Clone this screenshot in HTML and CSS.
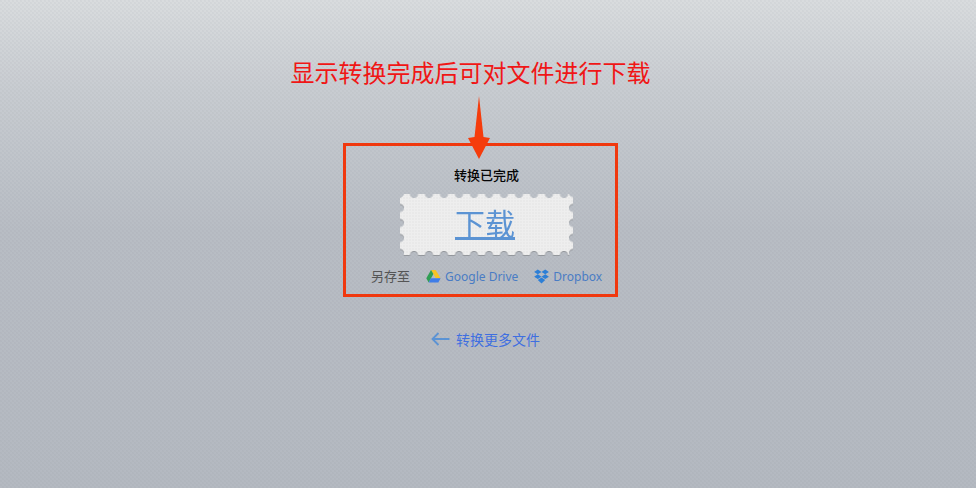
FILE: index.html
```html
<!DOCTYPE html>
<html lang="zh">
<head>
<meta charset="utf-8">
<title>转换已完成</title>
<link rel="stylesheet" href="styles.css">
</head>
<body>
<main class="page">
  <h1 class="note">显示转换完成后可对文件进行下载</h1>
  <section class="result">
    <svg class="pointer" width="22" height="63" viewBox="0 0 22 63" aria-hidden="true">
      <path d="M11 0 L15.500 41 L22 42 L11 63 L0 42 L6.500 41 Z" fill="#f53c0c"/>
    </svg>
    <h2 class="status">转换已完成</h2>
    <div class="ticket-edge">
      <a class="ticket" href="#">下载</a>
    </div>
    <div class="save">
      <span class="save-label">另存至</span>
      <a class="service service-drive" href="#">
        <svg width="15" height="13" viewBox="0 0 15 13" aria-hidden="true">
          <path d="M5 0 H9.700 L14.600 8.200 H9.800 Z" fill="#f7c325"/>
          <path d="M5 0 L7.400 4.100 L2.700 12.400 L0.300 8.300 Z" fill="#2f9e53"/>
          <path d="M4.800 8.300 H14.700 L12.300 12.500 H2.700 Z" fill="#3f7de8"/>
        </svg>
        <span>Google Drive</span>
      </a>
      <a class="service" href="#">
        <svg width="15" height="15" viewBox="0 0 15 15" aria-hidden="true">
          <path d="M3.800 0.500 L7.500 2.900 L3.800 5.300 L0.100 2.900 Z M11.200 0.500 L14.900 2.900 L11.200 5.300 L7.500 2.900 Z M3.800 5.300 L7.500 7.700 L3.800 10.100 L0.100 7.700 Z M11.200 5.300 L14.900 7.700 L11.200 10.100 L7.500 7.700 Z M3.800 11 L7.500 8.600 L11.200 11 L7.500 14.500 Z" fill="#2d7fd6"/>
        </svg>
        <span>Dropbox</span>
      </a>
    </div>
  </section>
  <a class="back" href="#">
    <svg width="19" height="14" viewBox="0 0 19 14" aria-hidden="true">
      <path d="M18.500 7 H1.500 M7.500 1 L1.500 7 L7.500 13" fill="none" stroke="#5b93d4" stroke-width="1.800"/>
    </svg>
    <span>转换更多文件</span>
  </a>
</main>
</body>
</html>
```

FILE: styles.css
```css
* { box-sizing: border-box; }

html, body { height: 100%; }

body {
  margin: 0;
  font-family: "Noto Sans", "Noto Sans CJK SC", sans-serif;
  background-color: #b3b8c0;
  background-image:
    radial-gradient(circle at 1px 1px, rgba(110, 115, 125, 0.05) 1px, transparent 1.3px),
    radial-gradient(circle at 3px 3px, rgba(110, 115, 125, 0.05) 1px, transparent 1.3px),
    linear-gradient(to bottom, #d9dcde 0, #c8ccd1 90px, #b8bdc4 230px, #b4b9c1 488px);
  background-size: 4px 4px, 4px 4px, 100% 100%;
  overflow: hidden;
}

.page {
  display: flex;
  flex-direction: column;
  align-items: center;
  padding: 55px 5px 0 0;
}

.note {
  margin: 0 30px 69px 0;
  height: 34px;
  font-size: 24px;
  line-height: 34px;
  font-weight: 400;
  color: #f01616;
  white-space: nowrap;
  font-family: "Noto Sans CJK SC", sans-serif;
}

.result {
  position: relative;
  display: flex;
  flex-direction: column;
  align-items: center;
  width: 275px;
  height: 154px;
  margin: -15px 10px 0 0;
  border: 3px solid #f0380e;
  padding-top: 19px;
}

.pointer {
  position: absolute;
  top: -50px;
  left: 122px;
}

.status {
  margin: 0 0 10px 12px;
  height: 19px;
  font-size: 13px;
  line-height: 19px;
  font-weight: 500;
  color: #050505;
  font-family: "Noto Sans CJK SC", sans-serif;
}

.ticket-edge {
  margin-left: 11px;
  filter: drop-shadow(0 1px 0 rgba(70, 70, 70, 0.3));
}

.ticket {
  display: flex;
  align-items: center;
  justify-content: center;
  width: 173px;
  height: 61px;
  padding: 0 2px 6px 0;
  font-size: 30px;
  color: #5b93d3;
  font-family: "Noto Sans CJK SC", sans-serif;
  text-decoration: underline;
  background-color: #eeeeee;
  background-image:
    radial-gradient(circle at 1px 1px, rgba(0, 0, 0, 0.02) 1px, transparent 1.3px);
  background-size: 3px 3px;
  -webkit-mask-image:
    radial-gradient(circle at 50% 0, transparent 3.6px, #000 4.4px),
    radial-gradient(circle at 50% 100%, transparent 3.6px, #000 4.4px),
    radial-gradient(circle at 0 50%, transparent 3.6px, #000 4.4px),
    radial-gradient(circle at 100% 50%, transparent 3.6px, #000 4.4px);
  mask-image:
    radial-gradient(circle at 50% 0, transparent 3.6px, #000 4.4px),
    radial-gradient(circle at 50% 100%, transparent 3.6px, #000 4.4px),
    radial-gradient(circle at 0 50%, transparent 3.6px, #000 4.4px),
    radial-gradient(circle at 100% 50%, transparent 3.6px, #000 4.4px);
  -webkit-mask-size: 15px 100%, 15px 100%, 100% 15px, 100% 15px;
  mask-size: 15px 100%, 15px 100%, 100% 15px, 100% 15px;
  -webkit-mask-repeat: repeat-x, repeat-x, repeat-y, repeat-y;
  mask-repeat: repeat-x, repeat-x, repeat-y, repeat-y;
  -webkit-mask-position: 6.500px 0, 6.500px 0, 0 6.500px, 0 6.500px;
  mask-position: 6.500px 0, 6.500px 0, 0 6.500px, 0 6.500px;
  -webkit-mask-composite: source-in;
  mask-composite: intersect;
}

.save {
  display: flex;
  align-items: center;
  align-self: flex-start;
  margin-top: 11px;
  margin-left: 25px;
  height: 20px;
  font-size: 12px;
  white-space: nowrap;
}

.save-label {
  margin-right: 16px;
  padding-bottom: 1px;
  font-size: 13px;
  color: #555;
  font-family: "Noto Sans CJK SC", sans-serif;
}

.service {
  display: flex;
  align-items: center;
  gap: 4px;
  color: #4a7cc4;
  text-decoration: none;
}

.service-drive { margin-right: 16px; }

.back {
  display: flex;
  align-items: center;
  gap: 6px;
  margin-top: 32px;
  font-size: 14px;
  line-height: 20px;
  color: #3f6fe0;
  text-decoration: none;
  font-family: "Noto Sans CJK SC", sans-serif;
}
```
